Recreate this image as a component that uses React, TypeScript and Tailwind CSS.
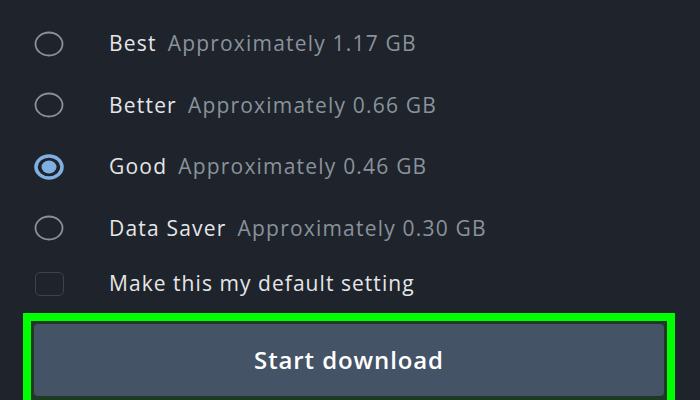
import React from 'react';

const options = [
  { name: 'Best', size: 'Approximately 1.17 GB', checked: false },
  { name: 'Better', size: 'Approximately 0.66 GB', checked: false },
  { name: 'Good', size: 'Approximately 0.46 GB', checked: true },
  { name: 'Data Saver', size: 'Approximately 0.30 GB', checked: false },
];

function Radio({ checked }: { checked: boolean }) {
  if (checked) {
    return (
      <svg width="30" height="26" viewBox="0 0 30 26">
        <ellipse cx="15" cy="13" rx="13" ry="11" fill="none" stroke="#7fb0e0" strokeWidth="3.5" />
        <ellipse cx="15" cy="13" rx="7.5" ry="6.5" fill="#7fb0e0" />
      </svg>
    );
  }
  return (
    <svg width="30" height="26" viewBox="0 0 30 26">
      <ellipse cx="15" cy="13" rx="13.5" ry="11.5" fill="none" stroke="#8b9199" strokeWidth="1.8" />
    </svg>
  );
}

export default function App() {
  return (
    <div
      className="w-[700px] h-[400px] overflow-hidden bg-[#1f232b] text-[21px] font-medium"
      style={{ fontFamily: '"Open Sans", "Noto Sans", sans-serif' }}
    >
      <div className="flex flex-col pt-[13px]">
        {options.map((o) => (
          <div key={o.name} className="flex items-center h-[61.5px]">
            <div className="w-[109px] flex pl-[34px]">
              <Radio checked={o.checked} />
            </div>
            <span className="text-[#e4e6e8] tracking-[1.2px]">{o.name}</span>
            <span className="ml-[11px] text-[#89939c] tracking-[1.2px]">{o.size}</span>
          </div>
        ))}
        <div className="flex items-center h-[50px]">
          <div className="w-[109px] flex pl-[35px]">
            <div className="w-[29px] h-[24px] rounded-[5px] border-[1.5px] border-[#3d434c]" />
          </div>
          <span className="text-[#e4e6e8] tracking-[1.05px]">Make this my default setting</span>
        </div>
        <div className="mt-[4px] ml-[23px] w-[652px] h-[100px] bg-[#00ff00] p-[8px]">
          <div className="w-full h-full bg-[#1d3a22] p-[3px]">
            <div className="h-[72px] rounded-[4px] bg-[#445366] flex items-center justify-center">
              <span className="text-white font-semibold text-[24px] tracking-[0.9px]">Start download</span>
            </div>
          </div>
        </div>
      </div>
    </div>
  );
}
